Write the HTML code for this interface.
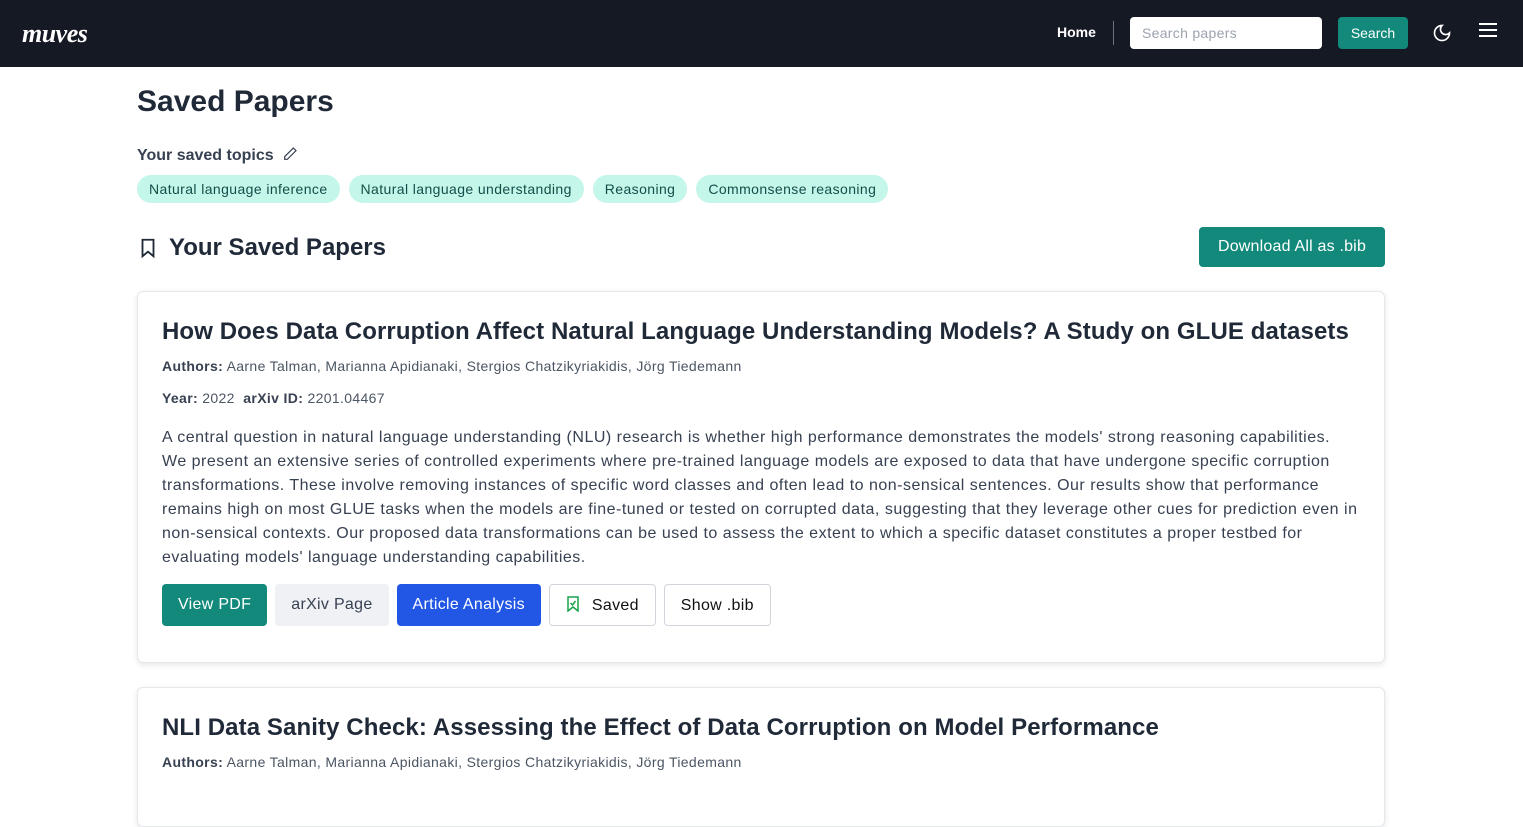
<!DOCTYPE html>
<html><head><meta charset="utf-8"><style>
*{box-sizing:border-box;margin:0;padding:0}
body{width:1523px;height:788px;overflow:hidden;background:#fff;font-family:"Liberation Sans",sans-serif;color:#1f2937}
.nav{height:67px;background:#151924;position:relative}
.logo{position:absolute;left:22px;top:19px;color:#fff;font:italic bold 26px "Liberation Serif",serif;letter-spacing:-0.5px}
.home{position:absolute;left:1057px;top:24px;color:#fff;font-weight:bold;font-size:14px}
.sep{position:absolute;left:1113px;top:21px;width:1px;height:24px;background:#6b7280}
.search{position:absolute;left:1130px;top:17px;width:192px;height:32px;background:#fff;border-radius:4px;color:#9ca3af;font-size:14px;padding:8px 12px;letter-spacing:0.3px}
.sbtn{position:absolute;left:1338px;top:17px;width:70px;height:32px;background:#12897a;border-radius:4px;color:#fff;font-size:14px;text-align:center;line-height:32px}
h1{position:absolute;left:137px;top:85px;font-size:30px;font-weight:bold;color:#1f2937}
.topics{position:absolute;left:137px;top:146px;font-size:16px;font-weight:bold;color:#374151}
.chips{position:absolute;left:137px;top:175px;display:flex;gap:9px}
.chip{background:#c4f6ea;color:#134e4a;border-radius:14px;height:28px;line-height:28px;padding:0 12px;font-size:14px;letter-spacing:0.4px}
.h2{position:absolute;left:137px;top:234px;font-size:24px;font-weight:bold;display:flex;align-items:center;gap:10px}
.dl{position:absolute;left:1199px;top:227px;width:186px;height:40px;background:#12897a;color:#fff;border-radius:4px;font-size:16px;text-align:center;line-height:40px;letter-spacing:0.2px}
.card{position:absolute;left:137px;width:1248px;border:1px solid #e5e7eb;border-radius:6px;box-shadow:0 2px 6px rgba(0,0,0,.1);padding:24px}
.t{font-size:24px;font-weight:bold;color:#1f2937;white-space:nowrap;letter-spacing:0.1px}
.m{font-size:14px;color:#4b5563;margin-top:12px;letter-spacing:0.35px}
.m b{color:#374151}
.abs{font-size:16px;line-height:24px;color:#374151;margin-top:20px;white-space:nowrap;letter-spacing:0.5px}
.btns{display:flex;gap:8px;margin-top:14px}
.b{height:42px;line-height:42px;padding:0 16px;border-radius:4px;font-size:16px;letter-spacing:0.3px}
</style></head><body>
<div class="nav">
<div class="logo">muves</div>
<div class="home">Home</div><div class="sep"></div>
<div class="search">Search papers</div>
<div class="sbtn">Search</div>
<svg style="position:absolute;left:1432px;top:23px" width="20" height="20" viewBox="0 0 24 24" fill="none" stroke="#fff" stroke-width="2"><path d="M12 3a6 6 0 0 0 9 9 9 9 0 1 1-9-9z"/></svg>
<svg style="position:absolute;left:1478px;top:22px" width="20" height="18" viewBox="0 0 20 18" stroke="#fff" stroke-width="2"><path d="M1 2h18M1 8h18M1 14h18"/></svg>
</div>
<h1>Saved Papers</h1>
<div class="topics">Your saved topics <svg width="16" height="16" viewBox="0 0 24 24" fill="none" stroke="#374151" stroke-width="1.8" style="vertical-align:-2px;margin-left:4px"><path d="M17 3l4 4L8 20H4v-4z"/></svg></div>
<div class="chips"><span class="chip">Natural language inference</span><span class="chip">Natural language understanding</span><span class="chip">Reasoning</span><span class="chip">Commonsense reasoning</span></div>
<div class="h2"><svg width="22" height="22" viewBox="0 0 24 24" fill="none" stroke="#1f2937" stroke-width="2"><path d="M6 3h12v18l-6-5-6 5z"/></svg>Your Saved Papers</div>
<div class="dl">Download All as .bib</div>
<div class="card" style="top:291px;height:372px;padding-top:26px">
<div class="t">How Does Data Corruption Affect Natural Language Understanding Models? A Study on GLUE datasets</div>
<div class="m"><b>Authors:</b> Aarne Talman, Marianna Apidianaki, Stergios Chatzikyriakidis, Jörg Tiedemann</div>
<div class="m" style="margin-top:16px"><b>Year:</b> 2022 &nbsp;<b>arXiv ID:</b> 2201.04467</div>
<div class="abs">A central question in natural language understanding (NLU) research is whether high performance demonstrates the models' strong reasoning capabilities.<br>We present an extensive series of controlled experiments where pre-trained language models are exposed to data that have undergone specific corruption<br>transformations. These involve removing instances of specific word classes and often lead to non-sensical sentences. Our results show that performance<br>remains high on most GLUE tasks when the models are fine-tuned or tested on corrupted data, suggesting that they leverage other cues for prediction even in<br>non-sensical contexts. Our proposed data transformations can be used to assess the extent to which a specific dataset constitutes a proper testbed for<br>evaluating models' language understanding capabilities.</div>
<div class="btns">
<div class="b" style="background:#12897a;color:#fff">View PDF</div>
<div class="b" style="background:#f0f1f5;color:#374151">arXiv Page</div>
<div class="b" style="background:#2257e6;color:#fff">Article Analysis</div>
<div class="b" style="border:1px solid #d1d5db;color:#111">
<svg width="14" height="16" viewBox="0 0 14 16" fill="none" stroke="#16a34a" stroke-width="1.5" style="vertical-align:-2px;margin-right:12px"><path d="M2 1h10v14l-5-4-5 4z"/><path d="M4.5 7l2 2 3-4"/></svg>Saved</div>
<div class="b" style="border:1px solid #d1d5db;color:#111">Show .bib</div>
</div></div>
<div class="card" style="top:687px;height:140px;padding-top:26px">
<div class="t">NLI Data Sanity Check: Assessing the Effect of Data Corruption on Model Performance</div>
<div class="m"><b>Authors:</b> Aarne Talman, Marianna Apidianaki, Stergios Chatzikyriakidis, Jörg Tiedemann</div>
</div>
</body></html>
